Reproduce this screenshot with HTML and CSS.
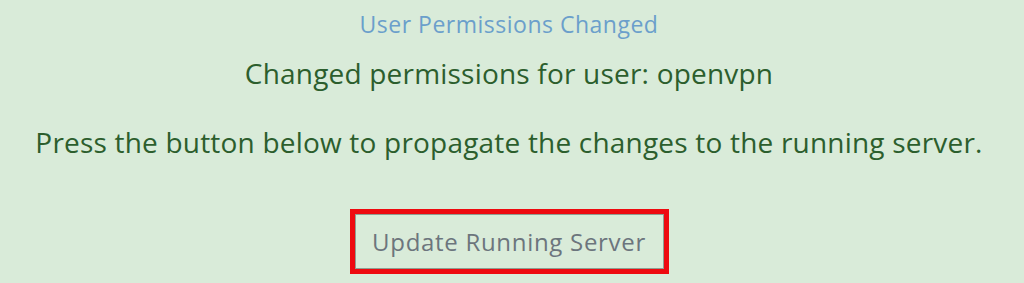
FILE: index.html
```html
<!DOCTYPE html>
<html>
<head>
<meta charset="utf-8">
<link rel="stylesheet" href="styles.css">
</head>
<body>
<div class="panel">
  <div class="title">User Permissions Changed</div>
  <p class="msg msg-user">Changed permissions for user: openvpn</p>
  <p class="msg msg-hint">Press the button below to propagate the changes to the running server.</p>
  <button class="update-btn" type="button">Update Running Server</button>
</div>
</body>
</html>
```
FILE: styles.css
```css
html, body {
  margin: 0;
  padding: 0;
  background: #d9ebd9;
  height: 100%;
}
.panel {
  display: flex;
  flex-direction: column;
  align-items: center;
  padding-top: 9px;
  padding-right: 6px;
}
.title {
  font-family: "Open Sans", "Liberation Sans", sans-serif;
  font-size: 23px;
  letter-spacing: 0.5px;
  line-height: 30px;
  color: #6b9fcb;
}
.msg {
  margin: 0;
  font-family: "Open Sans", "Liberation Sans", sans-serif;
  font-size: 28px;
  letter-spacing: 0.2px;
  line-height: 36px;
  color: #2c5e2d;
}
.msg-user {
  margin-top: 16px;
}
.msg-hint {
  margin-top: 33px;
}
.update-btn {
  margin-top: 54px;
  width: 309px;
  height: 55px;
  background: transparent;
  border: 1px solid #8f9e92;
  outline: 5px solid #ee0a10;
  font-family: "Open Sans", "Liberation Sans", sans-serif;
  font-size: 24px;
  letter-spacing: 0.7px;
  color: #6c757d;
  padding: 0;
}
```
